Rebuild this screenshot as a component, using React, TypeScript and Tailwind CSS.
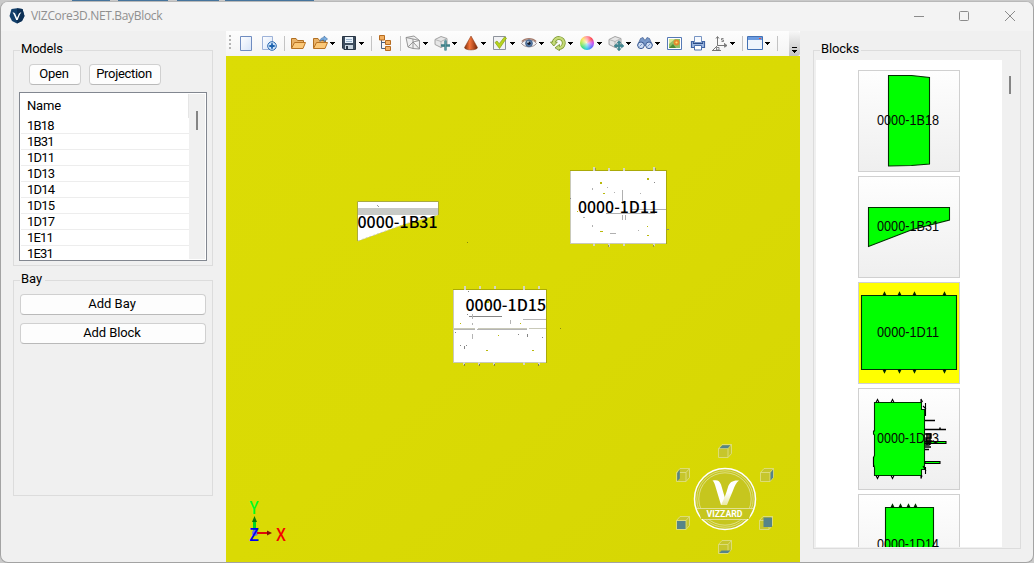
import type { ReactNode } from "react";

const MODEL_NAMES = ["1B18", "1B31", "1D11", "1D13", "1D14", "1D15", "1D17", "1E11", "1E31"];

function GroupBox({ title, titleWidth, className, children }: { title: string; titleWidth: string; className: string; children: ReactNode }) {
  return (
    <section className={`relative border border-[#dcdcdc] ${className}`}>
      <h2 className={`absolute left-[6px] -top-[10px] h-[18px] bg-[#f0f0f0] pl-[1px] text-[13px] leading-[16px] whitespace-nowrap ${titleWidth}`}>{title}</h2>
      {children}
    </section>
  );
}

function PushButton({ label, className }: { label: string; className: string }) {
  return (
    <button className={`h-[21px] rounded-[4px] border border-[#d0d0d0] border-b-[#b9b9b9] bg-[#fdfdfd] pr-[2px] pb-[2px] text-[13px] leading-[17px] whitespace-nowrap ${className}`}>
      {label}
    </button>
  );
}

/* ---------- toolbar ---------- */

function Folder() {
  return (
    <>
      <path d="M1.500 13V3.500H6l1.500 2h6V8" fill="#e9b267" stroke="#b06f22" />
      <path d="M1.500 13.500 4.500 7.500h11l-2.500 6z" fill="#fbc878" stroke="#b97322" />
    </>
  );
}

function Cube() {
  return (
    <>
      <path d="M1 4.500 7 1.500l6 2v6l-6 3-6-3z" fill="#e6e6e6" stroke="#9a9a9a" strokeWidth=".9" />
      <path d="m1 4.500 6 2 6-3M7 6.500v6" fill="none" stroke="#aaa" strokeWidth=".8" />
    </>
  );
}

function MoveArrows() {
  return (
    <path d="M11 5.500 13 8h-1.200v1.800h1.700V8.500L16 11l-2.500 2v-1.300h-1.700v2H13L11 16l-2-2.300h1.200v-2H8.500V13L6 11l2.500-2.500v1.300h1.700V8H9z" fill="#3f8a93" stroke="#2c6b74" strokeWidth=".4" />
  );
}

const ICONS: Record<string, ReactNode> = {
  page: <path d="M2.500 1.500h11v14h-11z" fill="url(#paper)" stroke="#6f8cc0" />,
  pageAdd: (
    <>
      <path d="M1.500 1.500h10v13h-10z" fill="url(#paper)" stroke="#9db2d8" />
      <circle cx="11" cy="11" r="4.300" fill="#cfe4fa" stroke="#2a68ad" />
      <path d="M11 8.300v5.400M8.300 11h5.400" stroke="#1d63ae" strokeWidth="1.800" />
    </>
  ),
  folder: <Folder />,
  folderOpen: (
    <>
      <Folder />
      <path d="M8 6.500C8.500 3 10 2.500 12 2.700V1l3.500 3L12 6.800V5c-2-.2-3 .3-4 1.500z" fill="#7baee0" stroke="#386a9e" strokeWidth=".6" />
    </>
  ),
  save: (
    <>
      <path d="M1.500 1.500h13v13H3l-1.500-1.500z" fill="#3d4d5e" stroke="#293645" />
      <path d="M4 2h8v6H4z" fill="#eaf3fb" />
      <path d="M5 4.500h6M5 6.500h6" stroke="#9cb5cc" />
      <path d="M4 10h8v4H4z" fill="#c9d4dd" />
      <path d="M5 11h2v3H5z" fill="#293645" />
    </>
  ),
  tree: (
    <>
      <path d="M4.500 5v8.500H9M4.500 7.500H9" fill="none" stroke="#4c617c" />
      <path d="M2.500 .5h5v4.500h-5zM8.500 5.500h5v4h-5zM8.500 11.500h5v4h-5z" fill="#f2b062" stroke="#b56b20" />
    </>
  ),
  wire: (
    <path d="M1 2.500 8 4v9.500L3 12zM1 2.500 9 1l5.500 4.500-6.500-1.500M14.500 5.500v8.500L8 13.500M3 12l5-5 6.500 7M8 7l6.500-1.500" fill="#efefef" stroke="#8d8d8d" strokeWidth=".9" />
  ),
  cubeAdd: (
    <>
      <Cube />
      <path d="M11.500 5.500v10M7 10.500h9" stroke="#3f8088" strokeWidth="2.400" />
      <path d="M11.500 4.500v11" stroke="#62a1a8" strokeWidth=".8" />
    </>
  ),
  cone: <path d="M8 1 14.500 12.500c0 3.200-13 3.200-13 0z" fill="url(#cone)" stroke="#82340e" strokeWidth=".5" />,
  check: (
    <>
      <path d="M1.500 1.500h12v13h-12z" fill="#f1f2f4" stroke="#8d929b" />
      <path d="m3 7.500 2-1.500 2.200 2.700L12.500 2l2 1.200-7 10.300z" fill="#b7d41c" stroke="#87a012" strokeWidth=".7" />
    </>
  ),
  eye: (
    <>
      <path d="M.5 8.500C4 3.500 12 3.500 15.500 8.500 12 13 4 13 .5 8.500z" fill="#f3f3f5" stroke="#8c7c80" strokeWidth=".8" />
      <path d="M.8 6.500C4.500 2.700 11.500 2.700 15.200 6.500" fill="none" stroke="#a67c6c" strokeWidth="1.100" />
      <circle cx="8" cy="8.300" r="3.500" fill="#5578a4" stroke="#34557e" strokeWidth=".6" />
      <circle cx="8" cy="8.300" r="1.600" fill="#151c2b" />
      <circle cx="7" cy="7" r=".8" fill="#fff" />
    </>
  ),
  refresh: (
    <>
      <path d="M3.800 7.500A5 5 0 1 1 8.500 13" fill="none" stroke="#77932b" strokeWidth="3.800" />
      <path d="M.5 7h6.800L3.800 11zM9.500 9.500v6.200L5 12.800z" fill="#c5da78" stroke="#718d28" strokeWidth=".8" />
      <path d="M3.800 8A5 5 0 1 1 8.500 13" fill="none" stroke="#c5da78" strokeWidth="2.300" />
    </>
  ),
  binoculars: (
    <>
      <path d="M3.500 3.500 6 2.500 7.500 5h1L10 2.500l2.500 1 3 7H.5z" fill="#7999c9" stroke="#405d92" strokeWidth=".7" />
      <circle cx="4" cy="10.300" r="3.300" fill="#cfdef4" stroke="#3b5b93" />
      <circle cx="12" cy="10.300" r="3.300" fill="#cfdef4" stroke="#3b5b93" />
      <path d="m2.500 11.500 3-3m5 3 3-3" stroke="#7997c5" />
    </>
  ),
  picture: (
    <>
      <path d="M.5 2.500h14v12H.5z" fill="#fff" stroke="#5579b5" />
      <path d="M2 4h11v9H2z" fill="#8fc069" />
      <path d="M2 4h6L2 9z" fill="#d9e996" />
      <path d="m2 13 4-4 3 4z" fill="#4f8a35" />
      <circle cx="9.500" cy="7.500" r="3" fill="#e48930" />
      <circle cx="9.500" cy="7.500" r="1.100" fill="#ffdf69" />
    </>
  ),
  printer: (
    <>
      <path d="M4.500 1.500h7v6h-7z" fill="#f6f9fe" stroke="#7794c3" />
      <path d="M1.500 6.500h2v2h9v-2h2v6h-13z" fill="#9db8e0" stroke="#3f63a3" strokeWidth="1.200" />
      <path d="M4.500 10.500h7v4.500h-7z" fill="#fff" stroke="#4e70ab" />
      <path d="M3 8.500h10" stroke="#284a86" />
    </>
  ),
  axes: (
    <>
      <path d="M5.500 2v8.500M5.500 10.500H15M5.500 10.500 1 15M4 3.500 5.500 1.500 7 3.500M13 9l2 1.500-2 1.500" fill="none" stroke="#777" />
      <path d="M11.500 3.500H9.500v1.500h2v1.500h-2M12.500 8v4.500M4.500 12.500h2.500v2.500H4.500z" fill="none" stroke="#777" strokeWidth=".9" />
      <path d="M0 15.500h9" stroke="#666" strokeWidth=".9" />
    </>
  ),
  window: (
    <>
      <path d="M.5 1.500h15v13H.5z" fill="#eef4fc" stroke="#4371b4" />
      <path d="M1 2h14v3H1z" fill="#6b9be0" />
      <path d="M12 3.500h2" stroke="#e4523e" />
    </>
  ),
  cubeMove: (
    <>
      <Cube />
      <MoveArrows />
    </>
  ),
};

const TOOLS = [
  "page", "pageAdd", "|", "folder", "folderOpen+", "save+", "|", "tree", "|", "wire+", "cubeAdd+", "cone+", "check+", "eye+",
  "refresh+", "wheel+", "cubeMove+", "binoculars+", "picture", "printer", "axes+", "|", "window+", "|",
];

function ToolItem({ spec }: { spec: string }) {
  if (spec === "|") return <div className="my-[5px] mr-[2px] ml-[3px] w-0 shrink-0 border-l border-[#c3c3c3]" />;
  const menu = spec.endsWith("+");
  const name = menu ? spec.slice(0, -1) : spec;
  return (
    <button className={`flex shrink-0 items-center pb-[2px] ${menu ? "w-[29px] pl-[2px]" : "w-[23px] pl-[3px]"}`}>
      {name === "wheel" ? (
        <span className="m-[1px] size-[14px] rounded-full bg-[radial-gradient(circle,#ffffffcc_0%,#ffffff00_70%),conic-gradient(#ff8ba0,#ff4040,#c53cf0,#5068ff,#20c4e8,#34d97a,#a4e640,#ffe055,#ff8ba0)]" />
      ) : (
        <svg className="size-4" viewBox="0 0 16 16">{ICONS[name]}</svg>
      )}
      {menu && (
        <svg className="mt-[1px] ml-[2px] h-[3px] w-[5px]" viewBox="0 0 5 3" shapeRendering="crispEdges">
          <path d="M0 0h5v1H4v1H3v1H2V2H1V1H0z" />
        </svg>
      )}
    </button>
  );
}

function Toolbar() {
  return (
    <div className="flex h-[25px] w-[574px] bg-linear-to-b from-[#fdfdfd] to-[#f4f4f4]">
      <svg className="h-0 w-0 shrink-0">
        <defs>
          <linearGradient id="paper" x2="1" y2="1"><stop stopColor="#fff" /><stop offset="1" stopColor="#d7e4f8" /></linearGradient>
          <linearGradient id="cone"><stop stopColor="#7c2c0c" /><stop offset=".4" stopColor="#f5753a" /><stop offset="1" stopColor="#762507" /></linearGradient>
        </defs>
      </svg>
      <div className="flex w-[9px] flex-col gap-[2px] pt-[4px] pl-[3px]">
        {[0, 1, 2, 3].map((i) => <i key={i} className="size-[2px] bg-[#b4b4b4]" />)}
      </div>
      {TOOLS.map((t, i) => <ToolItem key={i} spec={t} />)}
      <div className="ml-auto flex w-[11px] flex-col items-center justify-end rounded-r-[3px] bg-linear-to-b from-[#f8f8f8] to-[#c2c2c2] pb-[3px]">
        <svg className="h-[6px] w-[5px]" viewBox="0 0 5 6" shapeRendering="crispEdges">
          <path d="M0 0h5v1H0zM0 3h5v1H4v1H3v1H2V5H1V4H0z" />
        </svg>
      </div>
    </div>
  );
}

/* ---------- 3D viewport ---------- */

const SCENE_TEXT = "[font-family:'Noto_Sans_CJK_KR','Noto_Sans',sans-serif] text-[16px] font-medium";

function NavCube({ x, y, face }: { x: number; y: number; face: string }) {
  return (
    <g transform={`translate(${x} ${y})`}>
      <path d="M0 4 3.500 0H13v9l-3.500 4H0z" fill="#c6c62c" stroke="#dfdf80" strokeWidth=".9" />
      <path d="M0 4h9.500L13 0M9.500 4v9" fill="none" stroke="#dfdf80" strokeWidth=".9" />
      <path d={face} fill="#568489" />
    </g>
  );
}

function Viewport() {
  return (
    <svg className="block h-[506px] w-[574px]" viewBox="226 56 574 506">
      <defs>
        <linearGradient id="ground" x2="1" y2="1"><stop stopColor="#dcdc05" /><stop offset=".5" stopColor="#dada04" /><stop offset="1" stopColor="#d6d604" /></linearGradient>
        <linearGradient id="vee" x2="0" y2="1"><stop stopColor="#fff" /><stop offset=".5" stopColor="#fff" /><stop offset="1" stopColor="#e8e8a0" /></linearGradient>
      </defs>
      <path d="M226 56h574v506H226z" fill="url(#ground)" />

      <path d="M357.500 201.500H438V215l-33 9-47 17z" fill="#fff" />
      <path d="M358 208h80v7H358z" fill="#c8cac6" />
      <path d="M357.500 241V201.500H438.500V215" fill="none" stroke="#aaaa40" />
      <path d="m358 241 47-17 33-9" fill="none" stroke="#c6c6b0" strokeDasharray="2 2" />
      <path d="m377 205 2 2" stroke="#999" />
      <text x="357.500" y="228" textLength="80" lengthAdjust="spacingAndGlyphs" className={SCENE_TEXT}>0000-1B31</text>

      <g shapeRendering="crispEdges">
        <path d="M570 170h97v74h-97z" fill="#fff" />
        <path d="M570.500 171v72.500H666" fill="none" stroke="#c9c9b8" />
        <path d="M570 170.500h96.500V244" fill="none" stroke="#aaaa08" />
        <path d="M594 167v4M609 168v3M624 168v3M654 167v4M594 243v3M609 243v4M624 243v3M654 243v3" stroke="#d6d6c2" strokeWidth="2" />
        <path d="M595.500 168v3M655.500 168v3M608.500 245v2M653.500 245v2" stroke="#9a9a40" />
        <path d="M622.500 190v14M622.500 215v5M625.500 215v5M606 213.500h49M632 209.500h34M583 217.500h2M610 233.500h6M592.500 188v2M607.500 187v1M592.500 225v2M614.500 192v1M640.500 193v1M638.500 230v1" stroke="#b0b0b0" fill="none" />
        <path d="M600 182h2v2h-2zM647 178h2v2h-2zM603 193h2v1h-2zM600 231h3v1h-3zM647 226h1v1h-1zM647 235h2v1h-2zM577 211h1v1h-1z" fill="#b9b90c" />
        <path d="M654 182h1v1h-1zM667 229h2v1h-2zM570 198h1v1h-1z" fill="#888" />
      </g>
      <text x="578" y="213" textLength="80" lengthAdjust="spacingAndGlyphs" className={SCENE_TEXT}>0000-1D11</text>

      <g shapeRendering="crispEdges">
        <path d="M453 289h94v74h-94z" fill="#fff" />
        <path d="M453.500 290v72.500H546M453 328.500h22M478 328.500h49M529 328.500h17" fill="none" stroke="#c9c9b8" />
        <path d="M453 289.500h93.500V363" fill="none" stroke="#aaaa08" />
        <path d="M465 286v4M480 286v3M495 286v3M524 286v4M539 286v3M464 362v3M479 362v3M494 362v3M524 362v3M539 362v3" stroke="#d6d6c2" strokeWidth="2" />
        <path d="M464.500 364v2M479.500 364v2M494.500 364v2M538.500 364v2" stroke="#85853c" />
        <path d="M469 316.500h33" stroke="#858585" />
        <path d="M523 319.500h23M454 329.500h21M477 329.500h50M472.500 314v5M472.500 323v2M472.500 334v5M510.500 320v4" stroke="#b4b4b4" />
        <path d="M464.500 346v3M466.500 345v1M527.500 334v3M542.500 337v1M468.500 291v1M455.500 332v1M460.500 345v1M518.500 334v1M467 314.500h1" stroke="#858585" />
        <path d="M486 301h3v2h-3zM486 350h2v1h-2zM532 350h2v1h-2zM460 323h1v1h-1zM498 335h1v1h-1zM520 323h1v1h-1z" fill="#b9b90c" />
      </g>
      <text x="465.500" y="311" textLength="80.500" lengthAdjust="spacingAndGlyphs" className={SCENE_TEXT}>0000-1D15</text>
      <path d="M467 242.500h1M560 328.500h1" stroke="#8a8a10" />

      {/* axis triad */}
      <path d="M254.500 531V521" stroke="#00d820" strokeWidth="3" />
      <path d="m252 522 2.500-6 2.500 6z" fill="#087c08" />
      <circle cx="255" cy="533" r="3" fill="#7776cf" />
      <path d="M257 533h10" stroke="#df0808" strokeWidth="2" />
      <path d="m267 530.500 5 2.500-5 2.500z" fill="#841008" />
      <g className="[font-family:'Noto_Sans_CJK_KR',sans-serif] text-[17px] font-medium">
        <text x="249.500" y="513.500" textLength="9" lengthAdjust="spacingAndGlyphs" fill="#00ff20">Y</text>
        <text x="249" y="540.500" textLength="10" lengthAdjust="spacingAndGlyphs" fill="#0000f5">Z</text>
        <text x="276" y="540.500" textLength="10" lengthAdjust="spacingAndGlyphs" fill="#f50000">X</text>
      </g>

      {/* orientation control */}
      <NavCube x={718.500} y={444.500} face="M1 3.700 4 .8h8L9.300 3.700z" />
      <NavCube x={676.500} y={468.500} face="M.7 4.500 3.300 1v9L.7 12.500z" />
      <NavCube x={760.500} y={468.500} face="M10 4.200 12.600 1v8L10 12.300z" />
      <NavCube x={676.500} y={516.500} face="M.5 4.500H9v8H.5z" />
      <NavCube x={759.500} y={516.500} face="M4 1h8.500v9.500H4z" />
      <NavCube x={718.500} y={540.500} face="M.7 12.500 3 10h9l-2.500 2.500z" />
      <circle cx="725" cy="499" r="30.500" fill="#c6c61e" stroke="#fff" strokeWidth="1.500" />
      <circle cx="725" cy="499" r="28.200" fill="none" stroke="#e6e6a0" strokeWidth=".7" />
      <circle cx="725" cy="499" r="26.200" fill="none" stroke="#e6e6a0" strokeWidth=".8" />
      <path d="M698 508h54l-3 11h-48z" fill="#c6c61e" />
      <path d="M697 508.500h56M704 519.500h42" stroke="#e8e8ac" strokeWidth=".8" />
      <path d="M712.500 480.500c5-1 7 0 8.500 4l6 20.500h-6l-6-20c-.7-2.500-1.500-3.500-2.500-4.500z" fill="#fff" />
      <path d="M721 505c3-6 5-11 7-18 1.500-5 5-7 11-6.500-3 2-4 5-6 10l-6 14.500z" fill="url(#vee)" />
      <text x="706.500" y="517.300" textLength="36" lengthAdjust="spacingAndGlyphs" fill="#fff" className="[font-family:Roboto,sans-serif] text-[9px] font-bold">VIZZARD</text>
    </svg>
  );
}

/* ---------- block thumbnails ---------- */

const BLOCKS: { name: string; selected?: boolean; drawing: ReactNode }[] = [
  {
    name: "0000-1B18",
    drawing: <path d="M29.500 4.500h23L70.500 6.500v86.500l-18 1.500-23 .5z" />,
  },
  {
    name: "0000-1B31",
    drawing: <path d="M9.500 30.500h81v12.500l-37 9.500-44 17z" />,
  },
  {
    name: "0000-1D11",
    selected: true,
    drawing: (
      <>
        <path d="M2.500 12.500h95v74h-95z" />
        <path d="m24 12.500 1.500-3 1.500 3m12 0 1.500-3 1.500 3m12 0 1.500-3 1.500 3m27 0 1.500-3 1.500 3M24 86.500l1.500 3 1.500-3m12 0 1.500 3 1.500-3m12 0 1.500 3 1.500-3m27 0 1.500 3 1.500-3" fill="#000" />
      </>
    ),
  },
  {
    name: "0000-1D13",
    drawing: (
      <>
        <path d="M15.500 13.500h47v7h3v60h-3v6h-47v-8l-1-3v-7l1-2V46l-1-1v-3h1z" />
        <path d="m17 13.500 1.500-3 1.500 3m12 0 1.500-3 1.500 3m27 0V10l1.500 3M17 86.500l1.500 3 1.500-3m12 0 1.500 3 1.500-3m27 0v3l1-3M14.500 68v10M66.500 14v13M66.500 78v7M64 17l3 3M64 77l3 5" fill="none" stroke="#000" />
        <path d="M66 31.500h10M66 40.500h21m-6 0v-2M66 45h6v4h-5v3h5l-2 4h-4M66 58h6M66 60.500h4M66 53h5M68 44v12M71 44v12" fill="none" stroke="#000" strokeWidth="1.500" />
        <path d="M66 52.500h21v2H66zM66 72.500h15v2H66z" stroke="#000" />
      </>
    ),
  },
  {
    name: "0000-1D14",
    drawing: (
      <>
        <path d="M26.500 12.500h48v74h-48z" />
        <path d="m32 12.500 1.500-3 1.500 3m5 0 1.500-3 1.500 3m5 0 1.500-3 1.500 3m4 0 1.500-3 1.500 3" fill="#000" />
      </>
    ),
  },
];

function BlockCard({ name, selected, drawing }: (typeof BLOCKS)[number]) {
  return (
    <div className={`size-[102px] shrink-0 border border-[#d0d0d0] ${selected ? "bg-[#ffff00]" : "bg-linear-to-b from-[#fefefe] to-[#efefef]"}`}>
      <svg className="block size-[100px]" viewBox="0 0 100 100">
        <g fill="#00ff00" stroke="#003000" strokeWidth="1.100">{drawing}</g>
        <text x="18" y="54" textLength="62" lengthAdjust="spacingAndGlyphs" fill="#060606" className="[font-family:'Liberation_Sans',sans-serif] text-[14px]">{name}</text>
      </svg>
    </div>
  );
}

/* ---------- window ---------- */

function TitleBar() {
  return (
    <header className="flex h-[29px] shrink-0 items-center bg-[#f3f3f3] pb-[2px] pl-[8px]">
      <svg className="size-4" viewBox="0 0 16 16">
        <path d="M2.500 1 8 .3l5.500.7L15.500 8 13 13l-5 2.500L3 13 .5 8z" fill="#14406b" />
        <path d="M8 .3 13.500 1 15.500 8 13 13l-5 2.500z" fill="#0c2f54" />
        <path d="M3.500 4.500c2 0 2.500.5 3 2L8 10l1.500-3.500c.5-1.500 1.500-2 3-2-1 .8-1.300 1.500-2 3L8.700 12H7.200L5 7c-.4-1-.7-1.700-1.500-2.500z" fill="#fff" />
      </svg>
      <h1 className="ml-[6px] text-[12px] leading-[16px] font-normal tracking-[-0.33px] whitespace-nowrap text-[#8f8f8f] [font-family:'Open_Sans',sans-serif]">VIZCore3D.NET.BayBlock</h1>
      <svg className="ml-auto mr-[17px] h-[12px] w-[102px]" viewBox="0 0 102 12" fill="none" stroke="#8b8b8b">
        <path d="M0 6.500h10" />
        <rect x="45.500" y="1.500" width="9" height="9" rx="1" />
        <path d="m91 1 10 10m0-10-10 10" />
      </svg>
    </header>
  );
}

export default function App() {
  return (
    <div className="flex h-[563px] w-[1034px] flex-col bg-[#c9c9c9] font-normal text-black [font-family:Roboto,sans-serif]">
      <div className="flex h-px shrink-0 pl-[72px]">
        <i className="w-[38px] bg-[#46749c]" /><i className="ml-[8px] w-[50px] bg-[#46749c]" /><i className="ml-[9px] w-[42px] bg-[#46749c]" /><i className="ml-[6px] w-[89px] bg-[#46749c]" />
      </div>
      <div className="flex h-[562px] flex-col overflow-hidden rounded-[8px] border border-[#a3a3a3] border-t-[#b8b8b8] bg-[#f0f0f0]">
        <TitleBar />
        <div className="flex h-[531px] items-start">
          <aside className="w-[225px] shrink-0 pt-[19px] pl-[12px]">
            <GroupBox title="Models" titleWidth="w-[45px] tracking-[-0.2px]" className="h-[216px] w-[200px]">
              <div className="flex gap-[8px] pt-[13px] pl-[15px]">
                <PushButton label="Open" className="w-[52px] tracking-[-0.2px]" />
                <PushButton label="Projection" className="w-[72px] tracking-[-0.3px]" />
              </div>
              <div className="mt-[7px] ml-[5px] flex h-[169px] w-[188px] justify-between border border-[#828790] bg-white p-px text-[13px]">
                <div className="w-[168px] overflow-hidden">
                  <div className="h-[24px] border-r border-[#e5e5e5] pl-[6px] leading-[23px] tracking-[-0.2px]">Name</div>
                  {MODEL_NAMES.map((name) => (
                    <div key={name} className="h-[16px] border-b border-[#ededed] pl-[6px] leading-[15px] tracking-[-0.8px]">{name}</div>
                  ))}
                </div>
                <div className="w-[16px] bg-[#f0f0f0] pt-[17px] pl-[7px]">
                  <div className="h-[19px] w-[2px] bg-[#858585]" />
                </div>
              </div>
            </GroupBox>
            <GroupBox title="Bay" titleWidth="w-[25px]" className="mt-[14px] h-[216px] w-[200px]">
              <div className="flex flex-col gap-[8px] pt-[13px] pl-[6px]">
                <PushButton label="Add Bay" className="w-[186px]" />
                <PushButton label="Add Block" className="w-[186px] tracking-[-0.1px]" />
              </div>
            </GroupBox>
          </aside>
          <main className="w-[574px] shrink-0">
            <Toolbar />
            <Viewport />
          </main>
          <aside className="pt-[19px] pl-[13px]">
            <GroupBox title="Blocks" titleWidth="w-[41px] tracking-[-0.1px]" className="h-[499px] w-[208px]">
              <div className="flex gap-[7px] pt-[9px] pl-[2px]">
                <div className="flex h-[487px] w-[186px] flex-col items-center gap-[4px] overflow-hidden bg-white pt-[10px]">
                  {BLOCKS.map((b) => <BlockCard key={b.name} {...b} />)}
                </div>
                <div className="mt-[16px] h-[18px] w-[2px] bg-[#858585]" />
              </div>
            </GroupBox>
          </aside>
        </div>
      </div>
    </div>
  );
}
